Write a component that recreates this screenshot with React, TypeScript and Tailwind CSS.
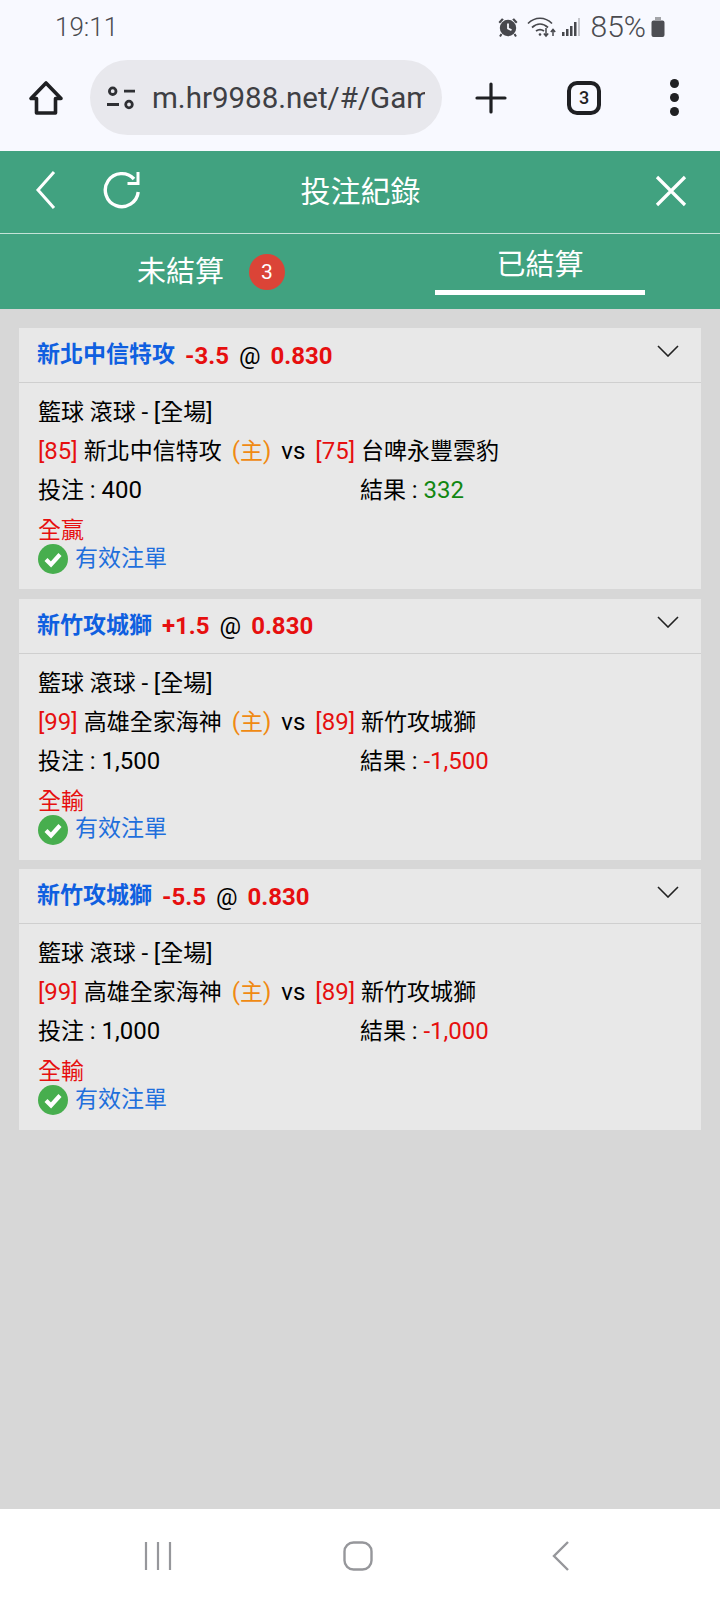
import type { ReactNode } from "react";

const font = "font-['Roboto','Noto_Sans_CJK_TC',sans-serif]";

function L({ children, className = "" }: { children: ReactNode; className?: string }) {
  return <span className={`text-[24px] ${className}`}>{children}</span>;
}

function StatusBar() {
  return (
    <div className="h-[60px] flex items-start justify-between pl-[55px] pr-[54px] pt-[13px] text-[#4a4b50]">
      <span className="text-[26px] leading-[28px] font-light">19:11</span>
      <div className="flex items-center h-[28px]">
        <svg width="22" height="22" viewBox="0 0 22 22" className="mr-[8px]" fill="#47484d">
          <circle cx="11" cy="12" r="8.2" />
          <path d="M1.5 6 5 2.2 6.8 3.6 3 7.6ZM20.5 6 17 2.2 15.2 3.6 19 7.6Z" />
          <path d="M4.5 18 3 20.5M17.5 18 19 20.5" stroke="#47484d" strokeWidth="2" />
          <path d="M11 7.5v5l3.5 1.6" stroke="#f8f9ff" strokeWidth="1.8" fill="none" />
        </svg>
        <svg width="31" height="24" viewBox="0 0 31 24" fill="none" stroke="#47484d" strokeWidth="1.7" className="mr-[3px]">
          <path d="M1 8.5C8 1.5 18 1.5 25 8.5" />
          <path d="M5 12.5C10 8 16 8 21 12.5" />
          <path d="M9 16c2.700-2 5.300-2 8 0" />
          <circle cx="13" cy="19.500" r="1.300" fill="#47484d" stroke="none" />
          <path d="M19 13v8M16.800 18.500 19 21l2.200-2.500M26 21v-6M23.800 17 26 14.500 28.200 17" strokeWidth="1.500" />
        </svg>
        <svg width="20" height="22" viewBox="0 0 20 22" className="mr-[10px]">
          <rect x="1" y="16" width="2.500" height="4" fill="#47484d" />
          <rect x="5" y="13" width="2.500" height="7" fill="#47484d" />
          <rect x="9" y="10" width="2.500" height="10" fill="#47484d" />
          <rect x="13" y="6" width="2.500" height="14" fill="#47484d" />
          <rect x="17" y="2" width="2" height="18" fill="#c5c6cc" />
        </svg>
        <span className="text-[30px] leading-none font-light">85%</span>
        <svg width="16" height="22" viewBox="0 0 16 22" className="ml-[4px]" fill="#4d4e53">
          <rect x="5" y="1" width="6" height="3" fill="#a3a4a8" />
          <path d="M1.500 6.500a2 2 0 0 1 2-2h9a2 2 0 0 1 2 2V19a2 2 0 0 1-2 2h-9a2 2 0 0 1-2-2Z" />
        </svg>
      </div>
    </div>
  );
}

function BrowserBar() {
  return (
    <div className="h-[91px] flex items-start">
      <div className="w-[90px] h-[75px] flex items-center justify-center">
        <svg width="36" height="36" viewBox="0 0 36 36" fill="none" stroke="#1f2023" strokeWidth="3.600" strokeLinejoin="round" className="ml-[2px]">
          <path d="M18 3 3 18.500h5.500V33h19V18.500H33Z" />
        </svg>
      </div>
      <div className="w-[352px] h-[75px] rounded-full bg-[#e8e8ed] flex items-center pl-[14px] overflow-hidden">
        <svg width="32" height="30" viewBox="0 0 32 30" fill="none" stroke="#2f3034" strokeWidth="2.800" className="shrink-0">
          <circle cx="8.700" cy="8.200" r="3.300" />
          <path d="M20 8.200h11M3 21.500h12" />
          <circle cx="25" cy="21.500" r="3.300" />
        </svg>
        <span className="ml-[16px] text-[29.500px] leading-[36px] text-[#3e3f44] whitespace-nowrap overflow-hidden w-[273px] shrink-0">m.hr9988.net/#/Gam</span>
      </div>
      <div className="w-[98px] h-[75px] flex items-center justify-center">
        <svg width="32" height="32" viewBox="0 0 32 32" stroke="#1f2023" strokeWidth="3.200" strokeLinecap="round">
          <path d="M16 2v28M2 16h28" />
        </svg>
      </div>
      <div className="w-[88px] h-[75px] flex items-center justify-center">
        <div className="w-[34px] h-[34px] border-4 border-[#1f2023] rounded-[10px] flex items-center justify-center text-[18px] font-medium leading-none text-[#1f2023]">3</div>
      </div>
      <div className="w-[92px] h-[75px] flex flex-col items-center justify-center gap-[5px]">
        <span className="w-[9px] h-[9px] rounded-full bg-[#1f2023]" />
        <span className="w-[9px] h-[9px] rounded-full bg-[#1f2023]" />
        <span className="w-[9px] h-[9px] rounded-full bg-[#1f2023]" />
      </div>
    </div>
  );
}

function AppHeader() {
  return (
    <div className="h-[83px] bg-[#41a280] border-b border-[#c5e3d8] flex items-center text-white">
      <div className="w-[90px] flex justify-center">
        <svg width="22" height="38" viewBox="0 0 22 38" fill="none" stroke="#fff" strokeWidth="3" className="mr-[-2px] mt-[-4px]">
          <path d="M19 1 3 19l16 18" />
        </svg>
      </div>
      <svg width="40" height="38" viewBox="0 0 40 38" fill="none" stroke="#fff" strokeWidth="3.400" className="ml-[13px] mt-[-5px]">
        <path d="M31 8A16.500 16.500 0 1 0 35.200 21" />
        <path d="M35 1v11.500H24.500" strokeWidth="3" />
      </svg>
      <div className="flex-1 text-center text-[30px] leading-none pr-[42px]">投注紀錄</div>
      <div className="w-[100px] flex justify-center">
        <svg width="32" height="32" viewBox="0 0 32 32" stroke="#fff" strokeWidth="3.200" className="mt-[-3px] ml-[2px]">
          <path d="M2 2l28 28M30 2 2 30" />
        </svg>
      </div>
    </div>
  );
}

function Tabs() {
  return (
    <div className="h-[75px] bg-[#41a280] flex text-white text-[29px] leading-none">
      <div className="w-1/2 flex items-center pl-[137px] pt-[1px]">
        <span>未結算</span>
        <span className="ml-[25px] w-[36px] h-[36px] rounded-full bg-[#db4437] text-[21px] flex items-center justify-center">3</span>
      </div>
      <div className="w-1/2 flex flex-col items-center pt-[17px]">
        <span>已結算</span>
        <span className="mt-[10px] w-[210px] h-[5px] bg-white ml-[-1px]" />
      </div>
    </div>
  );
}

type Bet = {
  team: string; line: string; home: string; away: string;
  sh: string; sa: string; stake: string; result: string; resultCls: string; status: string;
};

const bets: Bet[] = [
  { team: "新北中信特攻", line: "-3.5", sh: "[85]", home: "新北中信特攻", sa: "[75]", away: "台啤永豐雲豹", stake: "400", result: "332", resultCls: "text-[#128712]", status: "全贏" },
  { team: "新竹攻城獅", line: "+1.5", sh: "[99]", home: "高雄全家海神", sa: "[89]", away: "新竹攻城獅", stake: "1,500", result: "-1,500", resultCls: "text-[#e60f0f]", status: "全輸" },
  { team: "新竹攻城獅", line: "-5.5", sh: "[99]", home: "高雄全家海神", sa: "[89]", away: "新竹攻城獅", stake: "1,000", result: "-1,000", resultCls: "text-[#e60f0f]", status: "全輸" },
];

function Card({ b }: { b: Bet }) {
  return (
    <div className="h-[261px] bg-[#e8e8e8] text-[23px] text-black">
      <div className="h-[55px] border-b border-[#cfcfcf] flex items-center pl-[18px] pt-[1px] relative font-bold">
        <span className="text-[#0f5fe0]">{b.team}</span>
        <L className="ml-[10px] text-[#e60f0f]">{b.line}</L>
        <L className="ml-[10px] font-normal">@</L>
        <L className="ml-[10px] text-[#e60f0f]">0.830</L>
        <svg width="22" height="12" viewBox="0 0 22 12" fill="none" stroke="#222" strokeWidth="1.600" className="absolute right-[22px] top-[17px]">
          <path d="M1 1l10 10L21 1" />
        </svg>
      </div>
      <div className="pl-[19px] pt-[10px]">
        <div className="h-[39px] leading-[39px]">籃球 滾球 <L>-</L> <L>[</L>全場<L>]</L></div>
        <div className="h-[39px] leading-[39px] whitespace-nowrap">
          <L className="text-[#e60f0f]">{b.sh}</L>
          <span className="ml-[6px]">{b.home}</span>
          <span className="ml-[10px] text-[#f08a12]"><L>(</L>主<L>)</L></span>
          <L className="ml-[10px]">vs</L>
          <L className="ml-[10px] text-[#e60f0f]">{b.sa}</L>
          <span className="ml-[6px]">{b.away}</span>
        </div>
        <div className="h-[39px] leading-[39px] flex">
          <span className="w-[322px]">投注 <L>: {b.stake}</L></span>
          <span>結果 <L>: </L><L className={b.resultCls}>{b.result}</L></span>
        </div>
        <div className="text-[#e60f0f] leading-[30px] mt-[6px]">{b.status}</div>
        <div className="flex items-center h-[30px] text-[#1f6fdc] mt-[-2px]">
          <svg width="30" height="30" viewBox="0 0 30 30" className="mr-[7px]">
            <circle cx="15" cy="15" r="15" fill="#47ae4e" />
            <path d="M8 15.500l5 5 9-10" fill="none" stroke="#fff" strokeWidth="4.200" />
          </svg>
          <span>有效注單</span>
        </div>
      </div>
    </div>
  );
}

function BottomNav() {
  return (
    <div className="h-[91px] bg-white flex items-start pt-[32px]">
      <div className="w-[316px] flex justify-center">
        <svg width="28" height="30" viewBox="0 0 28 30" stroke="#96979b" strokeWidth="2.200">
          <path d="M2 1v28M14 1v28M26 1v28" />
        </svg>
      </div>
      <div className="w-[84px] flex justify-center">
        <svg width="30" height="30" viewBox="0 0 30 30" fill="none" stroke="#96979b" strokeWidth="2.400">
          <rect x="1.500" y="1.500" width="27" height="27" rx="9" />
        </svg>
      </div>
      <div className="flex-1 flex justify-center">
        <svg width="18" height="30" viewBox="0 0 18 30" fill="none" stroke="#96979b" strokeWidth="2.400" className="ml-[1px]">
          <path d="M16 1 2 15l14 14" />
        </svg>
      </div>
    </div>
  );
}

export default function App() {
  return (
    <div className={`w-[720px] h-[1600px] flex flex-col bg-[#f8f9ff] overflow-hidden ${font}`}>
      <StatusBar />
      <BrowserBar />
      <AppHeader />
      <Tabs />
      <div className="flex-1 bg-[#d7d7d7] px-[19px] pt-[19px] flex flex-col gap-[9.500px]">
        {bets.map((b, i) => <Card key={i} b={b} />)}
      </div>
      <BottomNav />
    </div>
  );
}
